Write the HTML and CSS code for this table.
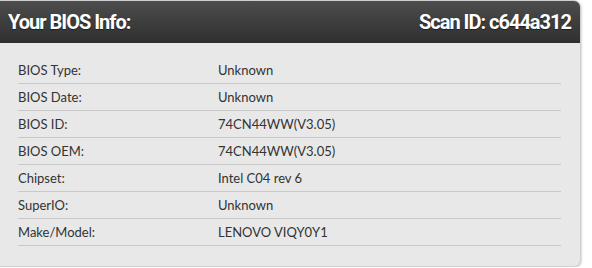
FILE: index.html
```html
<!DOCTYPE html>
<html lang="en">
<head>
  <meta charset="UTF-8">
  <title>BIOS Info</title>
  <link rel="stylesheet" href="styles.css">
</head>
<body>
  <div class="info-card">
    <div class="card-header">
      <h2 class="card-title">Your BIOS Info:</h2>
      <span class="scan-id">Scan ID: c644a312</span>
    </div>

    <div class="card-body">
      <div class="info-row">
        <span class="info-label">BIOS Type:</span>
        <span class="info-value">Unknown</span>
      </div>
      <div class="info-row">
        <span class="info-label">BIOS Date:</span>
        <span class="info-value">Unknown</span>
      </div>
      <div class="info-row">
        <span class="info-label">BIOS ID:</span>
        <span class="info-value">74CN44WW(V3.05)</span>
      </div>
      <div class="info-row">
        <span class="info-label">BIOS OEM:</span>
        <span class="info-value">74CN44WW(V3.05)</span>
      </div>
      <div class="info-row">
        <span class="info-label">Chipset:</span>
        <span class="info-value">Intel C04 rev 6</span>
      </div>
      <div class="info-row">
        <span class="info-label">SuperIO:</span>
        <span class="info-value">Unknown</span>
      </div>
      <div class="info-row">
        <span class="info-label">Make/Model:</span>
        <span class="info-value">LENOVO VIQY0Y1</span>
      </div>
    </div>
  </div>
</body>
</html>
```

FILE: styles.css
```css
:root {
  --header-top: #4d4d4d;
  --header-bottom: #2f2f2f;
  --body-bg: #e8e8e8;
  --line: #c9c9c9;
  --text: #333333;
}

body {
  margin: 0;
  background: #ffffff;
  font-family: Lato, "Open Sans", sans-serif;
}

.info-card {
  width: 580px;
  height: 265px;
  background-color: var(--body-bg);
  border: 1px solid #cfcfcf;
  border-left: none;
  border-radius: 0 7px 7px 0;
  box-shadow: 1px 1px 2px rgba(0, 0, 0, 0.15);
  overflow: hidden;
}

.card-header {
  display: flex;
  justify-content: space-between;
  align-items: center;
  height: 42px;
  padding: 0 9px 0 8px;
  background: linear-gradient(to bottom, var(--header-top), var(--header-bottom));
  color: #ffffff;
  font-family: Roboto, "Liberation Sans", sans-serif;
  font-weight: 700;
  font-size: 20px;
  letter-spacing: -1px;
  text-shadow: 0 1px 1px rgba(0, 0, 0, 0.5);
}

.card-title {
  margin: 0;
  font-size: inherit;
  font-weight: inherit;
}

.card-body {
  padding: 14px 19px 0 18px;
}

.info-row {
  display: flex;
  align-items: center;
  height: 26px;
  border-bottom: 1px solid var(--line);
  font-size: 13px;
  color: var(--text);
}

.info-label {
  width: 200px;
}
```
